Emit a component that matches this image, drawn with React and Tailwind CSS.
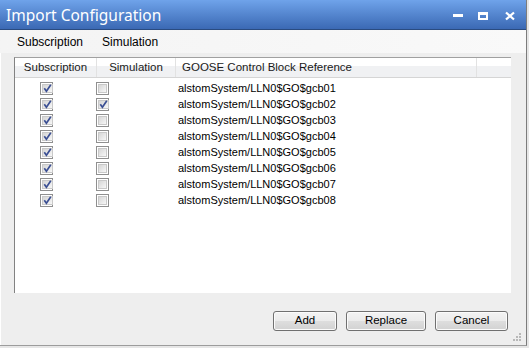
import React from "react";

const rows = [
  { sub: true, sim: false, ref: "alstomSystem/LLN0$GO$gcb01" },
  { sub: true, sim: true, ref: "alstomSystem/LLN0$GO$gcb02" },
  { sub: true, sim: false, ref: "alstomSystem/LLN0$GO$gcb03" },
  { sub: true, sim: false, ref: "alstomSystem/LLN0$GO$gcb04" },
  { sub: true, sim: false, ref: "alstomSystem/LLN0$GO$gcb05" },
  { sub: true, sim: false, ref: "alstomSystem/LLN0$GO$gcb06" },
  { sub: true, sim: false, ref: "alstomSystem/LLN0$GO$gcb07" },
  { sub: true, sim: false, ref: "alstomSystem/LLN0$GO$gcb08" },
];

const CheckBox = ({ checked }) => (
  <span className="w-[13px] h-[13px] border border-[#8f8f8f] bg-white p-[1px] flex">
    <span className="flex-1 flex items-center justify-center border border-[#c9c9c9] bg-linear-to-br from-[#d6d6d6] to-[#f7f7f7]">
      {checked && (
        <svg width="9" height="9" viewBox="0 0 9 9">
          <path d="M1.3 4.3 L3.4 7.2 L7.8 0.8" fill="none" stroke="#3b4f93" strokeWidth="1.7" />
        </svg>
      )}
    </span>
  </span>
);

const Button = ({ label, width }) => (
  <button
    className={`${width} h-[20px] rounded-[3px] border border-[#707070] shadow-[inset_0_0_0_1px_#fbfbfb] bg-[linear-gradient(#f3f3f3,#ebebeb_50%,#dedede_50%,#d2d2d2)] text-[11.5px] text-black flex items-center justify-center`}
  >
    {label}
  </button>
);

const App = () => {
  return (
    <div className="w-[529px] h-[348px] bg-[#e6e6e6] overflow-hidden font-['Liberation_Sans',Arial,sans-serif]">
      <div className="relative w-[527px] h-[346px] flex flex-col border-r border-r-[#7c7c7c] border-b border-b-[#9c9c9c] bg-[#eeeeee]">
        {/* title bar */}
        <div className="h-[30px] flex items-center border-b border-b-[#2a4b80] bg-linear-to-b from-[#6fa3ea] to-[#3b69b4]">
          <span className="ml-[6px] text-white text-[15.5px] font-['Noto_Sans',sans-serif] leading-none pt-[3px]">
            Import Configuration
          </span>
          <svg className="ml-auto mr-[8px]" width="72" height="29" viewBox="0 0 72 29">
            <rect x="7" y="14" width="10" height="3" fill="#fff" />
            <path d="M32 12h10v8h-10z M34 15v3h6v-3z" fill="#fff" fillRule="evenodd" />
            <path d="M60 12.5 L68 19.5 M68 12.5 L60 19.5" stroke="#fff" strokeWidth="2.3" />
          </svg>
        </div>

        {/* menu */}
        <div className="h-[23px] flex items-center bg-linear-to-r from-[#f4f4f4] to-[#f9f9f9] text-[12px] text-black">
          <span className="ml-[17px]">Subscription</span>
          <span className="ml-[19px]">Simulation</span>
        </div>

        {/* body */}
        <div className="flex-1 flex flex-col border-l border-l-white">
          <div className="ml-[13px] mt-[4px] w-[497px] h-[236px] bg-white border-t border-t-[#a0a0a0] border-l border-l-[#828282] flex flex-col">
            <div className="h-[20px] flex border-b border-b-[#d5d5d5] bg-[linear-gradient(to_bottom,#ffffff_40%,#f0f1f3_40%)] text-[11.5px] text-[#1a1a1a]">
              <div className="w-[82px] border-r border-r-[#e2e2e2] flex items-center justify-center">Subscription</div>
              <div className="w-[79px] border-r border-r-[#e2e2e2] flex items-center justify-center">Simulation</div>
              <div className="w-[301px] border-r border-r-[#e2e2e2] flex items-center pl-[6px]">GOOSE Control Block Reference</div>
              <div className="flex-1" />
            </div>
            <div className="pt-[2px] flex flex-col">
              {rows.map((row, index) => (
                <div key={index} className="h-[16px] flex items-center text-[11px] text-black">
                  <div className="w-[81px] pl-[25px] flex">
                    <CheckBox checked={row.sub} />
                  </div>
                  <div className="w-[81px] flex">
                    <CheckBox checked={row.sim} />
                  </div>
                  <div className="pl-[1px]">{row.ref}</div>
                </div>
              ))}
            </div>
          </div>

          <div className="mt-[18px] flex justify-end pr-[18px] gap-[9px]">
            <Button label="Add" width="w-[64px]" />
            <Button label="Replace" width="w-[80px]" />
            <Button label="Cancel" width="w-[73px]" />
          </div>
        </div>

        {/* size grip */}
        <svg className="absolute right-[4px] bottom-[3px]" width="10" height="10" viewBox="0 0 10 10">
          <rect x="7" y="1" width="2" height="2" fill="#b8b8b8" />
          <rect x="4" y="4" width="2" height="2" fill="#b8b8b8" />
          <rect x="7" y="4" width="2" height="2" fill="#b8b8b8" />
          <rect x="1" y="7" width="2" height="2" fill="#b8b8b8" />
          <rect x="4" y="7" width="2" height="2" fill="#b8b8b8" />
          <rect x="7" y="7" width="2" height="2" fill="#b8b8b8" />
        </svg>
      </div>
    </div>
  );
};

export default App;
